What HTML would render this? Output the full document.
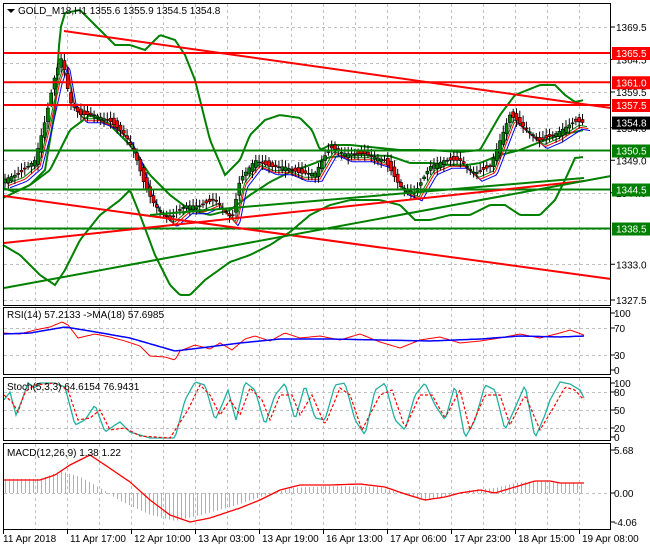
<!DOCTYPE html>
<html><head><meta charset="utf-8"><style>
html,body{margin:0;padding:0;background:#fff;}
svg{display:block;font-family:"Liberation Sans",sans-serif;font-size:10px;}
</style></head><body>
<svg id="s" width="650" height="550" xmlns="http://www.w3.org/2000/svg">
<rect width="650" height="550" fill="#fff"/>
<g id="grid" stroke="#c0c0c0" stroke-dasharray="3,3" stroke-width="1"></g>
<g id="draw"></g>
<g fill="none" stroke="#000" stroke-width="1">
<rect x="3.5" y="3.5" width="607" height="302"/>
<rect x="3.5" y="307.5" width="607" height="67"/>
<rect x="3.5" y="377.5" width="607" height="63"/>
<rect x="3.5" y="443.5" width="607" height="86"/>
</g>
<g id="ticks" stroke="#000"></g>
<g fill="#000">
<path d="M7 9 L15 9 L11 13 Z"/>
<text x="18" y="14">GOLD_M18,H1  1355.6 1355.9 1354.5 1354.8</text>
<text x="7" y="318">RSI(14) 57.2133  -&gt;MA(18) 57.6985</text>
<text x="7" y="390">Stoch(5,3,3) 64.6154 76.9431</text>
<text x="7" y="456">MACD(12,26,9) 1.38 1.22</text>
</g>
<g id="lab" fill="#000"></g>
</svg>
<script>
const NS="http://www.w3.org/2000/svg";
const S=document.getElementById('s'),G=document.getElementById('grid'),D=document.getElementById('draw'),T=document.getElementById('ticks'),L=document.getElementById('lab');
function el(p,n,a,t){const e=document.createElementNS(NS,n);for(const k in a)e.setAttribute(k,a[k]);if(t)e.textContent=t;p.appendChild(e);return e;}
const py=p=>27+(1369.5-p)*6.5;
for(let x=35;x<611;x+=32){[[4,305],[308,374],[378,440],[444,529]].forEach(r=>el(G,'line',{x1:x+.5,y1:r[0],x2:x+.5,y2:r[1]}));}
[1369.5,1364,1359.5,1354,1349,1344,1338.5,1333,1327.5].forEach(p=>el(G,'line',{x1:4,x2:610,y1:Math.round(py(p))+.5,y2:Math.round(py(p))+.5}));
[328,355,392,410,428,493].forEach(y=>el(G,'line',{x1:4,x2:610,y1:y+.5,y2:y+.5}));
function interp(k,x){for(let i=0;i<k.length-1;i++){if(x>=k[i][0]&&x<=k[i+1][0]){const t=(x-k[i][0])/(k[i+1][0]-k[i][0]);return k[i][1]+t*(k[i+1][1]-k[i][1]);}}return x<k[0][0]?k[0][1]:k[k.length-1][1];}
function pl(k,col,w,dash){let pts=[];for(let x=k[0][0];x<=k[k.length-1][0];x+=2)pts.push(x+','+interp(k,x).toFixed(1));const a={points:pts.join(' '),fill:'none',stroke:col,'stroke-width':w};if(dash)a['stroke-dasharray']=dash;el(D,'polyline',a);}
const P=[[3,1346],[20,1347],[35,1349],[45,1355],[55,1362],[62,1365],[70,1358],[80,1356],[95,1356],[110,1355],[125,1353],[135,1350],[145,1345],[155,1342],[170,1340],[185,1342],[200,1342],[215,1343],[232,1340],[240,1346],[255,1349],[270,1348],[285,1348],[300,1347],[315,1347],[330,1351],[345,1350],[365,1350],[385,1349],[400,1345],[415,1344],[430,1348],[445,1349],[460,1349],[475,1347],[490,1348],[500,1352],[510,1356],[525,1354],[540,1352],[555,1353],[565,1354],[575,1355],[583,1354.8]];
pl([[3,188],[15,192],[30,185],[45,170],[55,110],[60,30],[65,13],[80,10],[100,30],[115,45],[130,45],[145,50],[160,35],[175,40],[185,55],[195,80],[210,140],[225,175],[240,160],[250,135],[265,120],[280,115],[300,118],[312,130],[320,150],[330,145],[350,145],[380,148],[400,150],[430,150],[460,152],[480,150],[500,115],[515,95],[540,85],[555,85],[565,95],[575,102],[584,100]],'#008000',2);
pl([[3,245],[20,255],[40,275],[55,285],[65,270],[80,240],[100,215],[120,200],[130,190],[140,215],[155,255],[170,285],[180,295],[190,295],[205,280],[230,262],[250,255],[270,245],[290,232],[310,215],[330,205],[350,200],[380,200],[400,205],[415,220],[430,220],[450,215],[470,215],[490,205],[505,205],[520,215],[540,215],[555,200],[565,180],[575,158],[584,157]],'#008000',2);
pl([[3,198],[30,185],[50,170],[70,130],[90,115],[110,125],[130,145],[150,175],[170,195],[190,210],[210,215],[230,210],[250,195],[270,182],[290,172],[310,165],[330,157],[360,155],[390,156],[410,163],[430,163],[460,166],[480,163],[500,155],[520,150],[540,142],[560,135],[584,130]],'#008000',2);
const M=P.map(a=>[a[0]+4,py(a[1])+4]);
pl(M.map(a=>[a[0]+3,a[1]+4]),'#0000ff',1);pl(M.map(a=>[a[0]+1,a[1]+2]),'#ff0000',1);pl(M,'#008000',1);
for(let x=5;x<585;x+=3.3){const c=py(interp(P,x)),o=py(interp(P,x-3.3))+(Math.sin(x*1.7)*4);const hi=Math.min(c,o)-2-Math.abs(Math.sin(x*3))*5,lo=Math.max(c,o)+2+Math.abs(Math.cos(x*2.3))*5;el(D,'line',{x1:x.toFixed(1),x2:x.toFixed(1),y1:hi,y2:lo,stroke:'#000','stroke-width':1});const up=c<o;el(D,'rect',{x:(x-1.5).toFixed(1),y:Math.min(c,o),width:3,height:Math.max(1,Math.abs(c-o)),fill:up?'#008000':'#ff0000',stroke:'#000','stroke-width':.6});}
function hl(p,col){el(D,'line',{x1:4,x2:611,y1:py(p),y2:py(p),stroke:col,'stroke-width':2});}
hl(1365.5,'#ff0000');hl(1361,'#ff0000');hl(1357.5,'#ff0000');hl(1350.5,'#008000');hl(1344.5,'#008000');hl(1338.5,'#008000');
el(D,'line',{x1:64,y1:31,x2:611,y2:108,stroke:'#ff0000','stroke-width':2});
el(D,'line',{x1:4,y1:196,x2:611,y2:279,stroke:'#ff0000','stroke-width':2});
el(D,'line',{x1:4,y1:243,x2:584,y2:181,stroke:'#ff0000','stroke-width':2});
el(D,'line',{x1:4,y1:288,x2:611,y2:176,stroke:'#008000','stroke-width':2});
el(D,'line',{x1:150,y1:215,x2:584,y2:178,stroke:'#008000','stroke-width':2});
pl([[4,333],[20,334],[35,330],[50,327],[62,322],[68,325],[78,338],[95,334],[110,337],[125,341],[140,346],[150,356],[165,357],[175,360],[180,351],[195,345],[210,349],[220,343],[232,350],[245,339],[255,336],[270,341],[285,333],[300,338],[320,336],[340,340],[360,334],[380,342],[400,348],[420,340],[440,337],[460,343],[480,341],[500,338],[520,334],[540,338],[560,333],[570,330],[584,335]],'#ff0000',1);
pl([[4,334],[30,333],[65,327],[90,331],[130,338],[175,351],[200,348],[240,343],[280,339],[330,339],[380,340],[430,341],[480,339],[520,336],[560,337],[584,336]],'#0000ff',1.5);
pl([[4,400],[10,392],[16,415],[22,400],[28,383],[35,388],[40,383],[55,383],[65,387],[75,425],[85,420],[95,405],[105,432],[115,425],[120,422],[130,432],[150,438],[175,438],[185,400],[195,382],[205,385],[215,420],[222,405],[228,390],[236,420],[245,382],[255,390],[265,425],[275,395],[285,383],[295,420],[305,385],[315,418],[325,420],[335,385],[345,383],[355,420],[365,435],[375,390],[385,383],[395,420],[405,430],[415,395],[425,383],[435,405],[445,420],[455,385],[465,438],[475,420],[485,385],[495,390],[505,430],[515,408],[525,385],[535,438],[545,415],[550,400],[560,382],[570,384],[580,390],[584,398]],'#20b0a0',1.3);
pl([[4,395],[12,402],[18,412],[25,392],[35,385],[55,383],[68,390],[78,420],[90,418],[100,410],[110,430],[125,428],[140,436],[170,438],[188,410],[200,385],[210,395],[220,415],[230,400],[240,415],[250,388],[262,400],[270,420],[280,395],[292,395],[300,415],[312,395],[325,425],[340,388],[350,395],[362,430],[380,395],[392,390],[405,428],[420,395],[432,395],[445,418],[460,390],[470,430],[485,395],[500,395],[510,425],[525,395],[540,430],[555,405],[565,387],[575,390],[584,400]],'#ff0000',1.2,'3,2');
const H=[[4,14],[40,14],[60,22],[80,16],[100,5],[120,-8],[150,-22],[175,-28],[200,-22],[230,-14],[260,-4],[290,5],[330,7],[380,6],[405,-2],[425,-8],[445,-3],[470,3],[495,5],[515,10],[535,12],[560,10],[584,9]];
for(let x=5;x<585;x+=4){const v=interp(H,x);el(D,'line',{x1:x+.5,x2:x+.5,y1:493,y2:493-v,stroke:'#b0b0b0','stroke-width':1});}
pl([[4,480],[40,480],[55,475],[70,465],[90,455],[105,465],[130,482],[150,500],[170,515],[190,522],[210,518],[240,508],[260,500],[280,490],[300,485],[330,485],[360,484],[385,487],[405,494],[425,500],[445,497],[460,493],[480,490],[495,493],[515,487],[535,481],[550,481],[560,483],[584,483]],'#ff0000',1.3);
[1369.5,1364.5,1359.5,1354.0,1349.0,1344.0,1333.0,1327.5].forEach(p=>{const y=py(p);el(T,'line',{x1:611,x2:615,y1:y,y2:y});el(L,'text',{x:616,y:y+4},p.toFixed(1));});
function box(p,col,txt){const y=py(p);el(L,'rect',{x:612,y:y-6,width:38,height:13,fill:col});el(L,'text',{x:616,y:y+4,fill:'#fff'},txt);}
box(1365.5,'#ff0000','1365.5');box(1361,'#ff0000','1361.0');box(1357.5,'#ff0000','1357.5');box(1354.8,'#000','1354.8');box(1350.5,'#008000','1350.5');box(1344.5,'#008000','1344.5');box(1338.5,'#008000','1338.5');
[[313,'100'],[328,'70'],[355,'30'],[370,'0'],[383,'100'],[392,'80'],[410,'50'],[428,'20'],[437,'0'],[450,'5.68'],[493,'0.00'],[522,'-4.06']].forEach(a=>{el(T,'line',{x1:611,x2:615,y1:a[0],y2:a[0]});el(L,'text',{x:614,y:a[0]+4},a[1]);});
['11 Apr 2018','11 Apr 17:00','12 Apr 10:00','13 Apr 03:00','13 Apr 19:00','16 Apr 13:00','17 Apr 06:00','17 Apr 23:00','18 Apr 15:00','19 Apr 08:00'].forEach((t,i)=>{const x=3+64*i;el(T,'line',{x1:x+.5,x2:x+.5,y1:530,y2:534});el(L,'text',{x:x+(i?3:0),y:542},t);});
</script>
</body></html>
